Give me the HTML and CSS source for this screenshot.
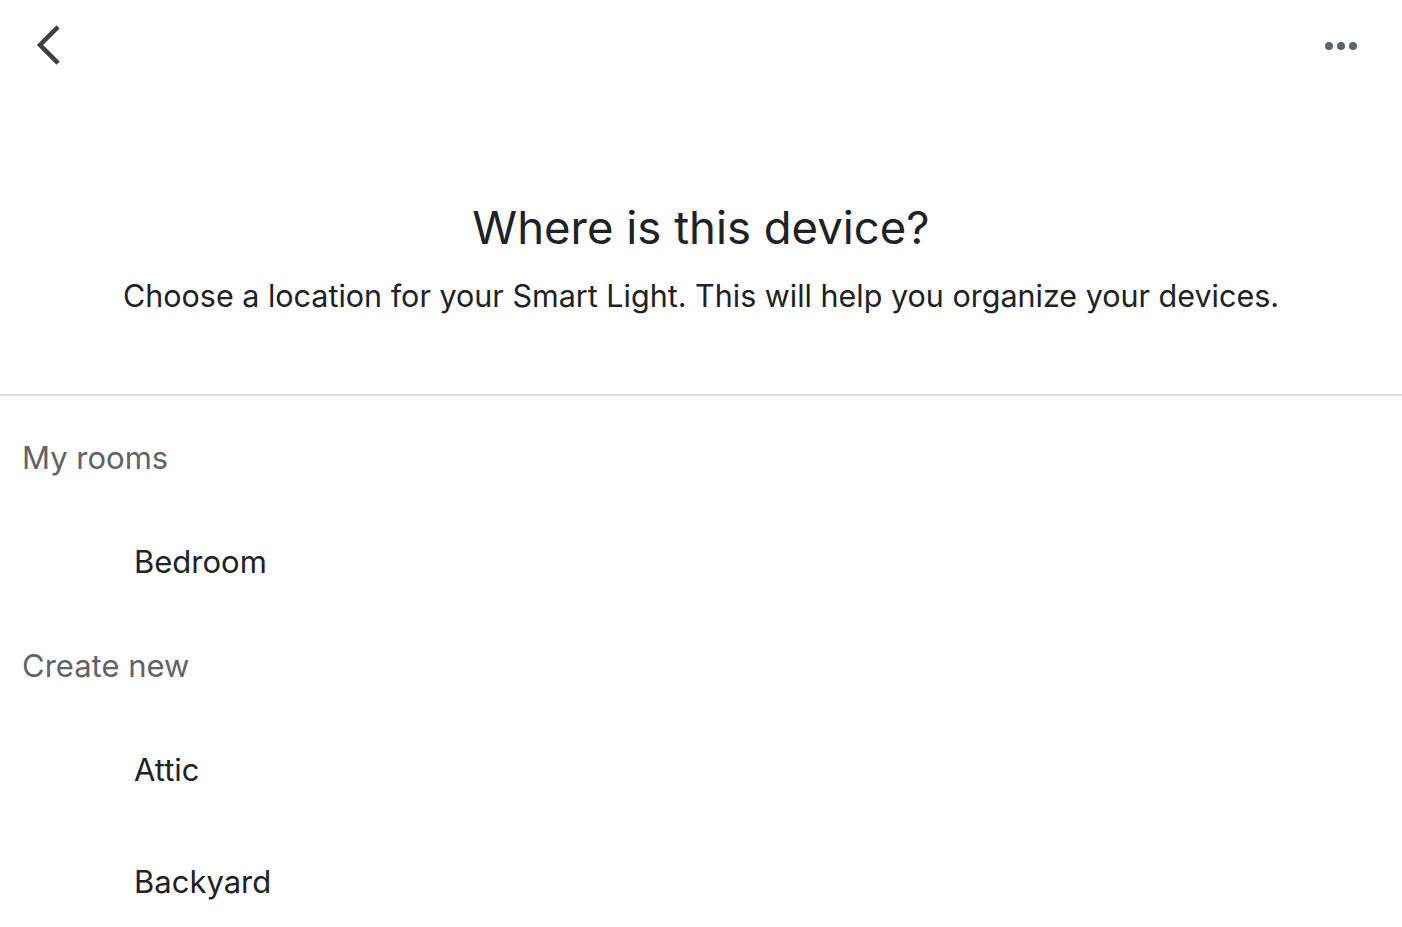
FILE: index.html
```html
<!DOCTYPE html>
<html lang="en">
<head>
<meta charset="utf-8">
<title>Where is this device?</title>
<link rel="stylesheet" href="styles.css">
</head>
<body>
<div class="page">
  <header class="topbar">
    <button class="icon-btn back" aria-label="Back">
      <svg width="28" height="40" viewBox="0 0 28 40"><path d="M23.5 3.5 L7 20 L23.5 36.5" fill="none" stroke="#3c4043" stroke-width="4.5" stroke-linecap="square"/></svg>
    </button>
    <button class="icon-btn more" aria-label="More">
      <svg width="34" height="10" viewBox="0 0 34 10"><circle cx="5" cy="5" r="4" fill="#5f6368"/><circle cx="17" cy="5" r="4" fill="#5f6368"/><circle cx="29" cy="5" r="4" fill="#5f6368"/></svg>
    </button>
  </header>
  <section class="intro">
    <h1 class="title">Where is this device?</h1>
    <p class="subtitle">Choose a location for your Smart Light. This will help you organize your devices.</p>
  </section>
  <hr class="divider">
  <div class="list">
    <div class="section-header">My rooms</div>
    <div class="item">Bedroom</div>
    <div class="section-header">Create new</div>
    <div class="item">Attic</div>
    <div class="item">Backyard</div>
  </div>
</div>
</body>
</html>
```
FILE: styles.css
```css
html, body {
  margin: 0;
  padding: 0;
  background: #ffffff;
}
body {
  font-family: Inter, Roboto, "Noto Sans", sans-serif;
  color: #202124;
  overflow: hidden;
}
.page {
  width: 1402px;
  height: 927px;
}
.topbar {
  height: 90px;
  display: flex;
  justify-content: space-between;
  align-items: center;
  padding: 0 44px 0 33px;
}
.icon-btn {
  border: 0;
  background: none;
  padding: 0;
  display: flex;
  align-items: center;
}
.more {
  margin-top: 2px;
}
.intro {
  padding: 110px 0 80px;
  text-align: center;
}
.title {
  margin: 0;
  font-size: 45.5px;
  font-weight: 400;
  line-height: 56px;
  color: #202124;
}
.subtitle {
  margin: 22px 0 0;
  font-size: 30.5px;
  line-height: 36px;
  color: #202124;
}
.divider {
  margin: 0;
  border: 0;
  border-top: 2px solid #dadce0;
}
.list {
  padding-top: 13px;
}
.section-header {
  height: 96px;
  display: flex;
  align-items: center;
  padding-left: 22px;
  font-size: 31px;
  color: #5f6368;
}
.item {
  height: 112px;
  display: flex;
  align-items: center;
  padding-left: 134px;
  font-size: 31px;
  color: #202124;
}
```
